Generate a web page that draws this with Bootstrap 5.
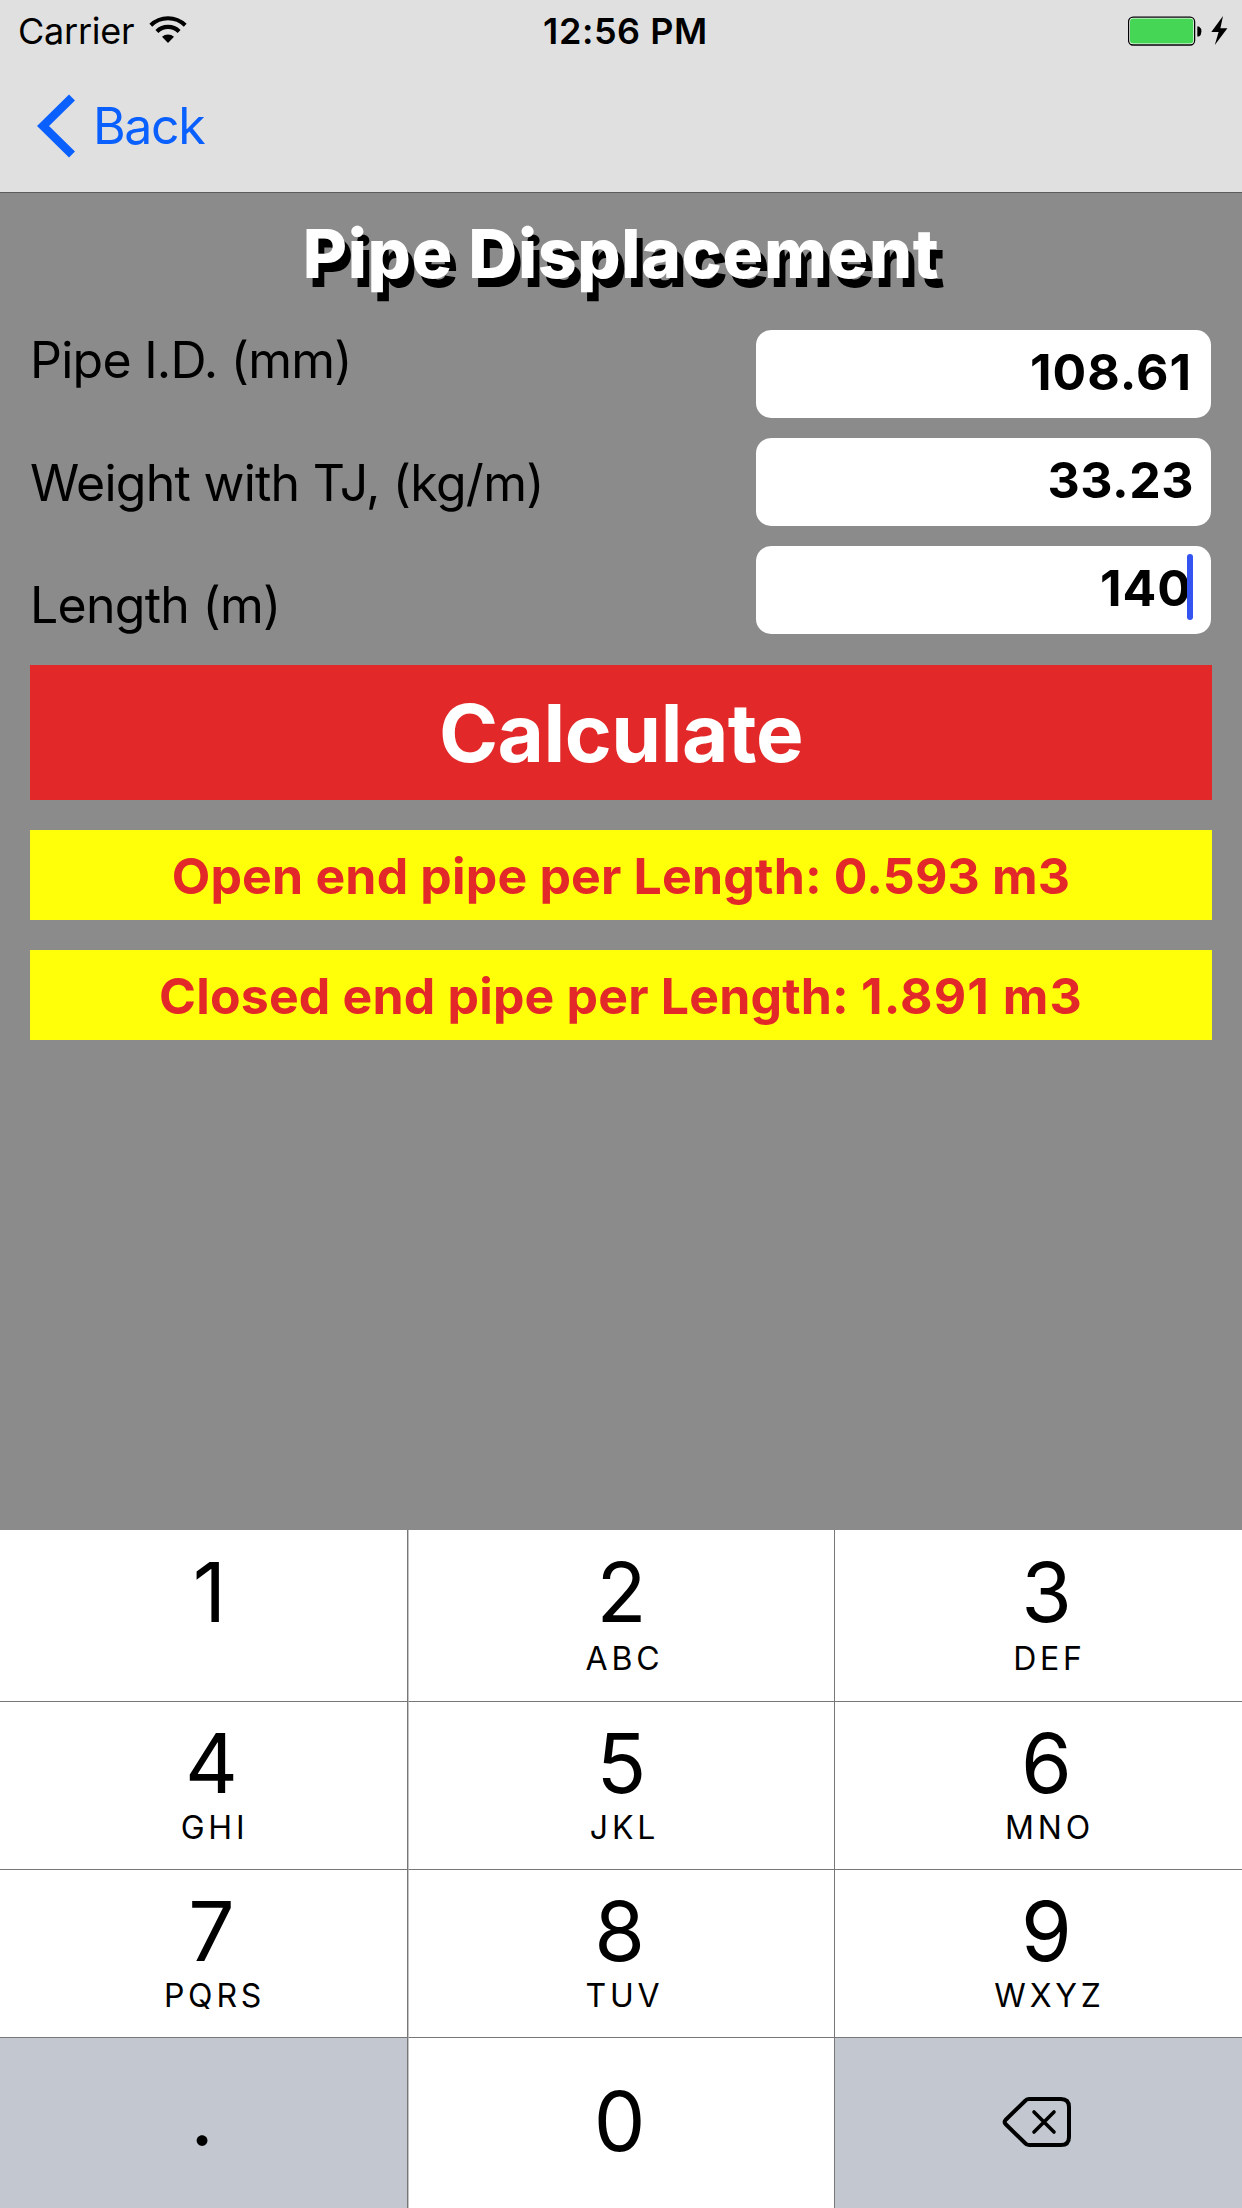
<!DOCTYPE html>
<html lang="en">
<head>
<meta charset="utf-8">
<meta name="viewport" content="width=device-width, initial-scale=1">
<title>Pipe Displacement</title>
<link href="https://cdn.jsdelivr.net/npm/bootstrap@5.3.0/dist/css/bootstrap.min.css" rel="stylesheet">
<style>
  body { background: #8b8b8b; color: #000; font-family: Inter, "Liberation Sans", sans-serif; height: 2208px; overflow: hidden; }
  svg { display: block; flex: none; }
  .app-top { background: #e0e0e0; height: 193px; border-bottom: 1px solid #5c5c5c; }
  .status-bar { height: 62px; padding: 0 14px 0 18px; font-size: 36px; line-height: 62px; }
  .status-side { flex: 1 1 0; }
  .carrier { letter-spacing: -.24px; }
  .clock { font-weight: 600; letter-spacing: .56px; padding-left: 5px; }
  .wifi { margin: -2px 0 0 15px; }
  .back-link { height: 128px; padding-left: 37px; gap: 17px; color: #0a60ff; font-size: 50px; line-height: 128px; letter-spacing: -1.4px; }
  .screen { height: 1337px; padding: 0 30px; }
  .screen-title { font-size: 68px; font-weight: 800; line-height: 120px; height: 137px; color: #fff; letter-spacing: .55px; text-shadow: 6px 9px 0 #000; }
  .labels { gap: 62.5px; margin-bottom: -1px; font-size: 50px; letter-spacing: -.74px; }
  .labels label { line-height: 60px; height: 60px; white-space: nowrap; }
  .fields { width: 455px; gap: 20px; margin-right: 1px; }
  .field { height: 88px; border-radius: 15px; background: #fff; font-size: 50px; font-weight: 700; line-height: 84px; padding-right: 17px; letter-spacing: .5px; }
  .field-ones { letter-spacing: 1px; padding-right: 19px; }
  .caret { position: absolute; right: 18px; top: 8px; width: 6px; height: 66px; border-radius: 3px; background: #3354f0; }
  .calc-btn { height: 135px; margin-top: 31px; background: #e22828 !important; color: #fff !important; border: 0; border-radius: 0; padding: 0; font-size: 80px; font-weight: 700; line-height: 135px; letter-spacing: -.48px; }
  .result { height: 90px; margin-top: 30px; background: #ffff0a; color: #e22828; font-size: 50px; font-weight: 700; line-height: 92px; letter-spacing: .17px; }
  .result-value { letter-spacing: 1.1px; }
  .keypad { display: grid; grid-template-columns: 408px 427px 407px; grid-template-rows: 172px 168px 168px 170px; }
  .key { background: #fff; border-bottom: 1px solid #777; padding-top: 15.5px; }
  .key:nth-child(3n+1) { border-right: 1px solid #777; padding-left: 16px; }
  .key:nth-child(3n+2) { border-left: 1px solid #c4c4c4; border-right: 1px solid #777; }
  .key:nth-child(3n) { padding-left: 16px; }
  .key:nth-child(n+10) { border-bottom: 0; padding: 0; }
  .key:nth-child(-n+3) { padding-top: 17px; }
  .key-alt { background: #c3c7cf; }
  .digit { font-size: 82px; line-height: 92px; height: 92px; }
  .letters { font-size: 32px; line-height: 36px; letter-spacing: 3.8px; padding-left: 6px; }
  .key:nth-child(-n+3) .letters { line-height: 39px; }
  .digit-left { padding-right: 4px; }
  .key-zero { padding: 0 4px 3px 0 !important; }
  .key-dot { padding: 0 3px 14px 0 !important; }
  .key-delete { padding: 0 4px 2px 0 !important; }
</style>
</head>
<body>
<header class="app-top">
  <div class="status-bar d-flex align-items-center">
    <div class="status-side d-flex align-items-center">
      <span class="carrier">Carrier</span>
      <svg class="wifi" width="38" height="28" viewBox="0 0 38 28" fill="none" stroke="#000">
        <path d="M1.8 9.2A24.6 24.6 0 0 1 36.2 9.2" stroke-width="4"/>
        <path d="M7.9 15.4A16 16 0 0 1 30.1 15.4" stroke-width="4.2"/>
        <path d="M13 20.8A9 9 0 0 1 25 20.8L19 27Z" fill="#000" stroke="none"/>
      </svg>
    </div>
    <div class="clock">12:56 PM</div>
    <div class="status-side d-flex align-items-center justify-content-end">
      <svg width="100" height="30" viewBox="0 0 100 30">
        <rect x=".6" y="1.2" width="66" height="27.8" rx="4.5" fill="#fff" stroke="#000" stroke-width="1.3"/>
        <rect x="2" y="2.600" width="63.2" height="25" rx="3" fill="#45d655"/>
        <path d="M69.3 10.500H71Q73.4 12 73.4 15.500T71 20.500H69.3Z"/>
        <path d="M95 0L83.3 16.1H90.6L86.8 29L99.4 12.2H92.4Z"/>
      </svg>
    </div>
  </div>
  <a class="back-link d-flex align-items-center text-decoration-none" href="#">
    <svg width="39" height="64" viewBox="0 0 39 64" fill="none" stroke="#0a60ff" stroke-width="8.5"><path d="M35 3.5L6 32L35 60.5"/></svg>
    <span>Back</span>
  </a>
</header>
<main class="screen">
  <h1 class="screen-title text-center m-0">Pipe Displacement</h1>
  <form>
    <div class="d-flex justify-content-between">
      <div class="labels d-flex flex-column">
        <label>Pipe I.D. (mm)</label>
        <label>Weight with TJ, (kg/m)</label>
        <label>Length (m)</label>
      </div>
      <div class="fields d-flex flex-column">
        <div class="field field-ones text-end">108.61</div>
        <div class="field text-end">33.23</div>
        <div class="field field-ones text-end position-relative">140<span class="caret"></span></div>
      </div>
    </div>
    <button type="button" class="calc-btn btn btn-danger w-100 d-block">Calculate</button>
    <div class="result text-center">Open end pipe per Length: 0.593 m3</div>
    <div class="result text-center">Closed end pipe per Length: <span class="result-value">1.891 m3</span></div>
  </form>
</main>
<section class="keypad text-center">
  <div class="key"><div class="digit digit-left">1</div></div>
  <div class="key"><div class="digit">2</div><div class="letters">ABC</div></div>
  <div class="key"><div class="digit">3</div><div class="letters">DEF</div></div>
  <div class="key"><div class="digit">4</div><div class="letters">GHI</div></div>
  <div class="key"><div class="digit">5</div><div class="letters">JKL</div></div>
  <div class="key"><div class="digit">6</div><div class="letters">MNO</div></div>
  <div class="key"><div class="digit">7</div><div class="letters">PQRS</div></div>
  <div class="key"><div class="digit digit-left">8</div><div class="letters">TUV</div></div>
  <div class="key"><div class="digit">9</div><div class="letters">WXYZ</div></div>
  <div class="key key-alt key-dot d-flex align-items-center justify-content-center"><div class="digit">.</div></div>
  <div class="key key-zero d-flex align-items-center justify-content-center"><div class="digit">0</div></div>
  <div class="key key-alt key-delete d-flex align-items-center justify-content-center">
    <svg width="70" height="52" viewBox="0 0 70 52" fill="none" stroke="#000" stroke-width="4" stroke-linecap="round" stroke-linejoin="round">
      <path d="M27 3H59Q67 3 67 11V41Q67 49 59 49H27Q24.500 49 23 47L3.500 28Q1.800 26 3.500 24L23 5Q24.500 3 27 3Z"/>
      <path d="M32 16L52 36M52 16L32 36" stroke-width="3.600"/>
    </svg>
  </div>
</section>
<script src="https://cdn.jsdelivr.net/npm/bootstrap@5.3.0/dist/js/bootstrap.bundle.min.js"></script>
</body>
</html>
